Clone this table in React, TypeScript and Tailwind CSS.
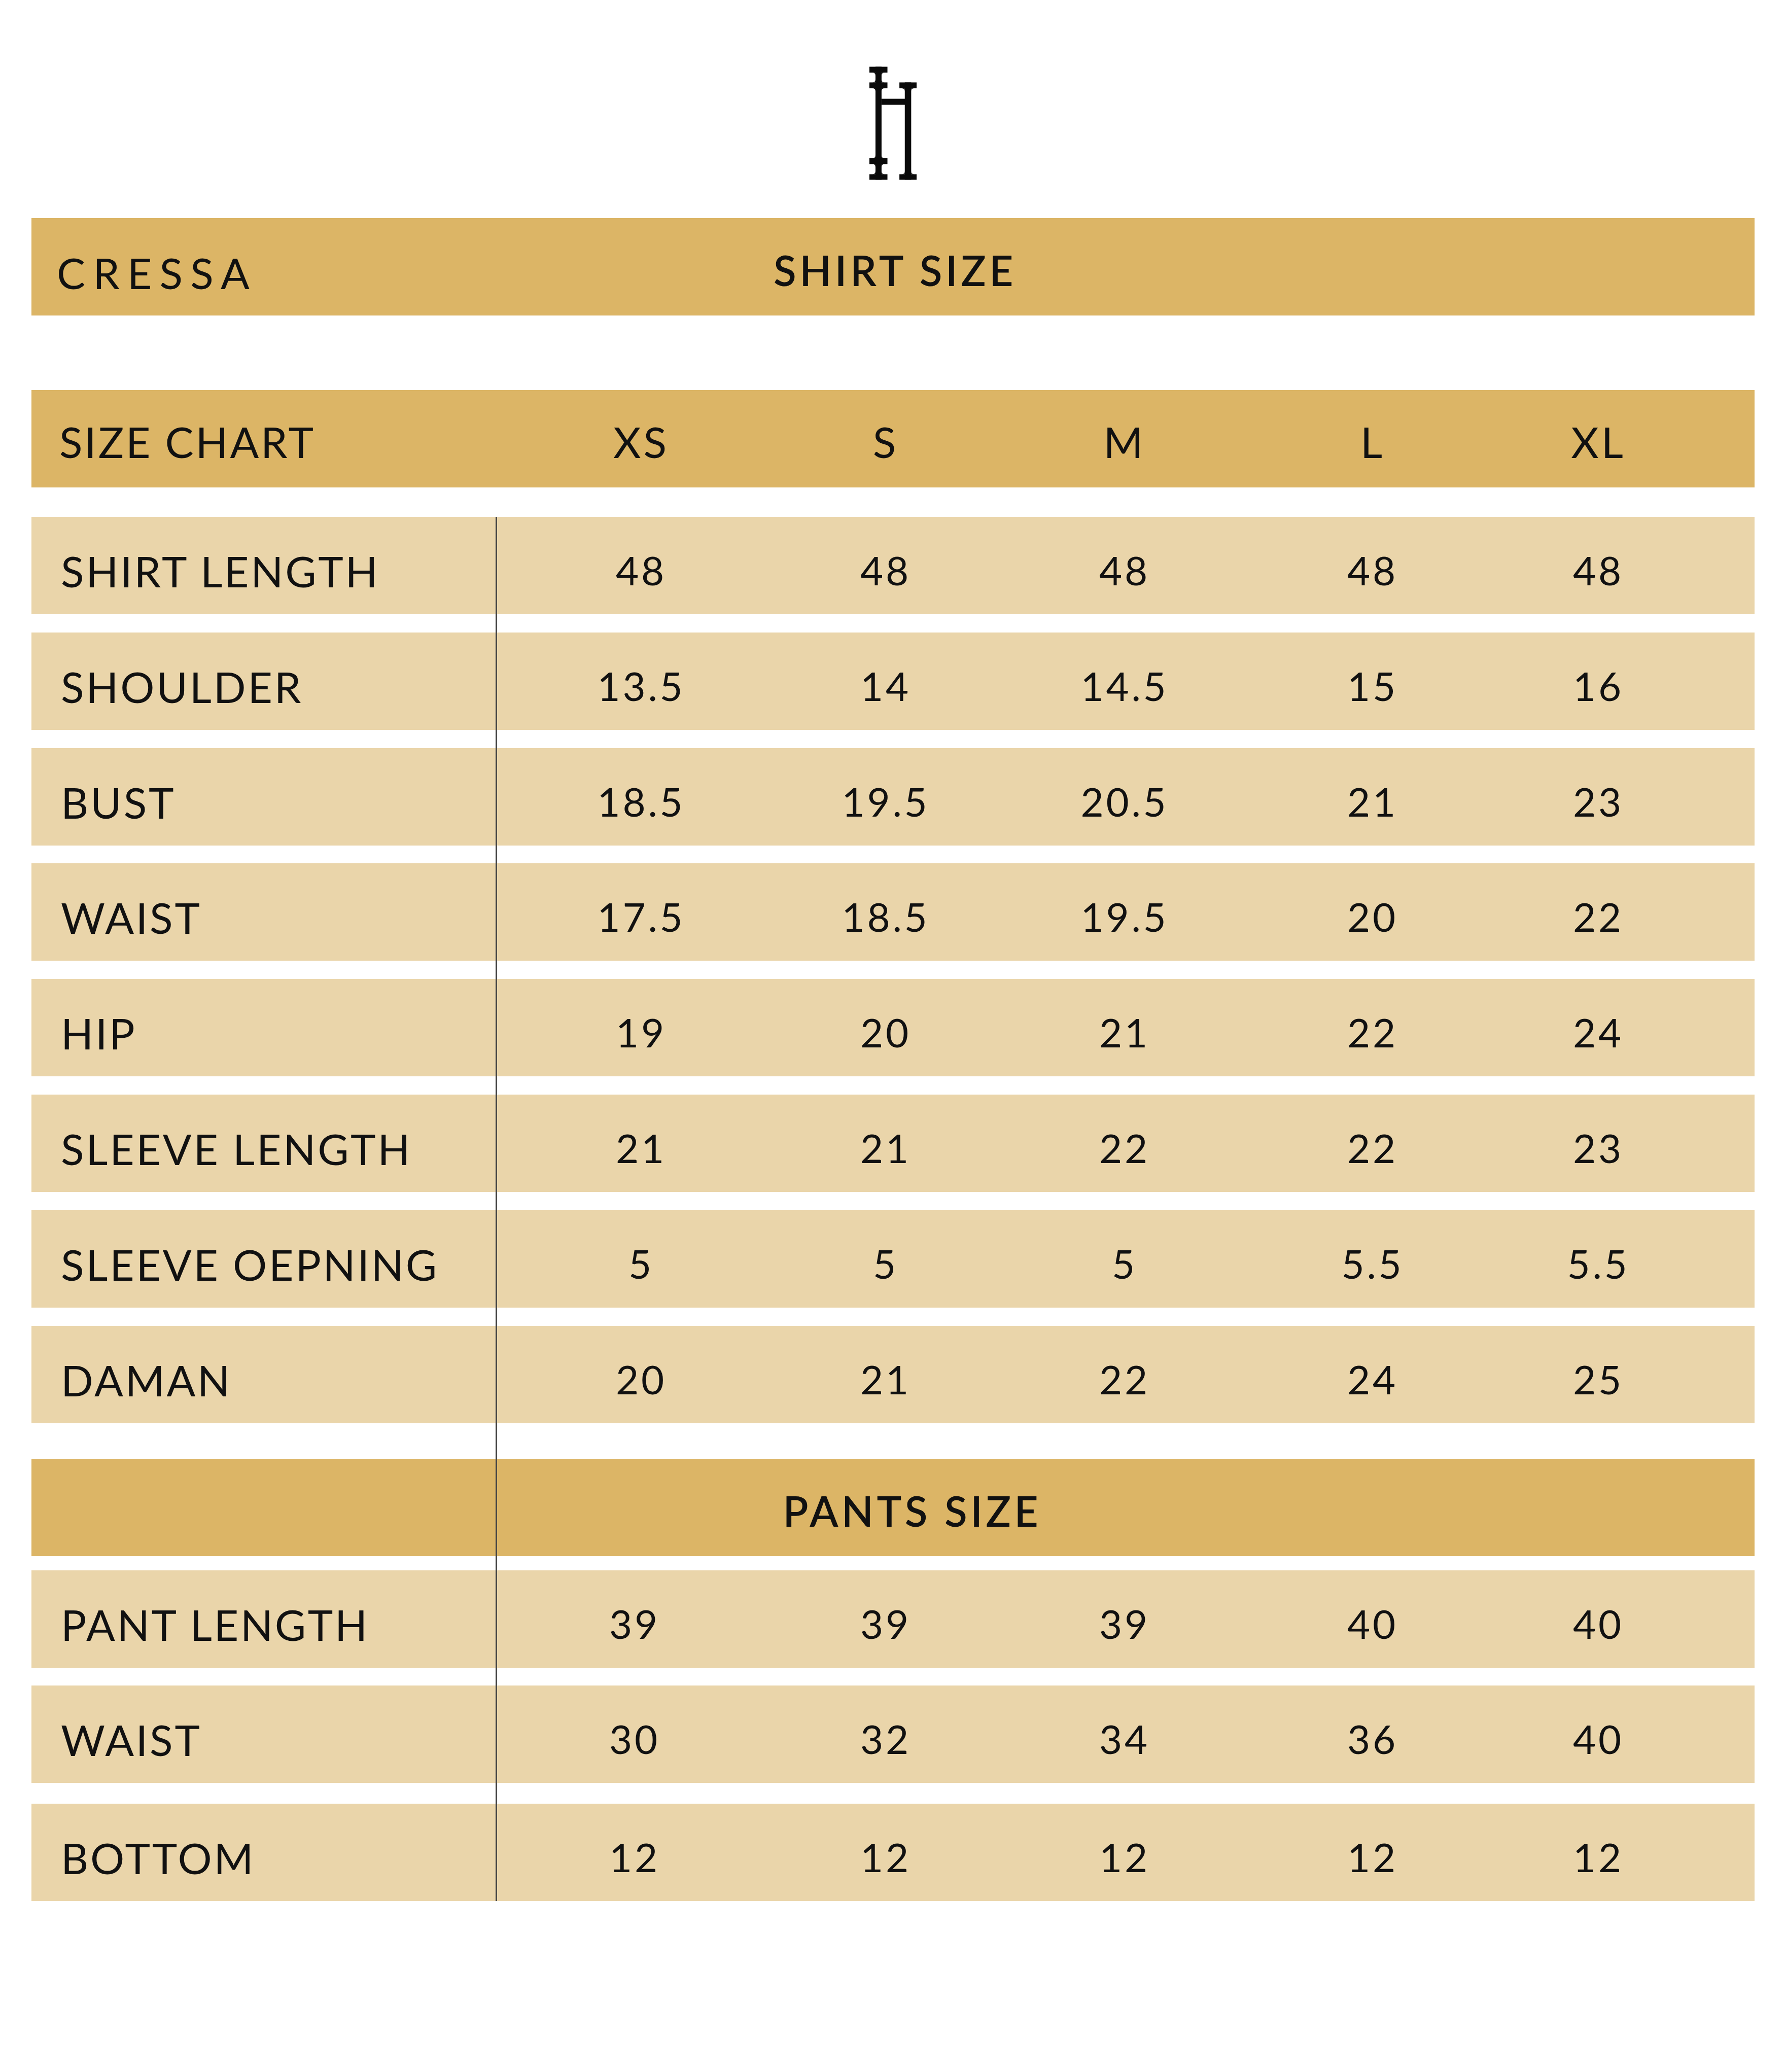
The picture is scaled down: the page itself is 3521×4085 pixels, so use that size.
const shirtRows: [string, string[]][] = [
  ["SHIRT LENGTH", ["48", "48", "48", "48", "48"]],
  ["SHOULDER", ["13.5", "14", "14.5", "15", "16"]],
  ["BUST", ["18.5", "19.5", "20.5", "21", "23"]],
  ["WAIST", ["17.5", "18.5", "19.5", "20", "22"]],
  ["HIP", ["19", "20", "21", "22", "24"]],
  ["SLEEVE LENGTH", ["21", "21", "22", "22", "23"]],
  ["SLEEVE OEPNING", ["5", "5", "5", "5.5", "5.5"]],
  ["DAMAN", ["20", "21", "22", "24", "25"]],
];

const pantRows: [string, string[]][] = [
  ["PANT LENGTH", ["39", "39", "39", "40", "40"]],
  ["WAIST", ["30", "32", "34", "36", "40"]],
  ["BOTTOM", ["12", "12", "12", "12", "12"]],
];

const pantGaps = ["mt-[28px]", "mt-[35px]", "mt-[41px]"];

// little concave bracket where a slab meets a stem
function fillet(cx: number, cy: number, dx: number, dy: number, s = 18) {
  return `M${cx + dx * s} ${cy} L${cx} ${cy} L${cx} ${cy + dy * s} Q${cx} ${cy} ${cx + dx * s} ${cy} Z`;
}

function Logo() {
  const f = [
    // left stem x 36..72
    fillet(36, 35, -1, 1), fillet(72, 35, 1, 1),
    fillet(36, 93, -1, -1), fillet(72, 93, 1, -1),
    fillet(36, 128, -1, 1), fillet(72, 128, 1, 1),
    fillet(36, 543, -1, -1), fillet(72, 543, 1, -1),
    fillet(36, 578, -1, 1), fillet(72, 578, 1, 1),
    fillet(36, 638, -1, -1), fillet(72, 638, 1, -1),
    // right stem x 210..248
    fillet(210, 128, -1, 1), fillet(248, 128, 1, 1),
    fillet(210, 638, -1, -1), fillet(248, 638, 1, -1),
  ];
  return (
    <svg width="93" height="224" viewBox="0 0 280 671" fill="#0a0a0a">
      <rect x="36" y="0" width="36" height="671" />
      <rect x="0" y="0" width="107" height="35" />
      <rect x="0" y="93" width="107" height="35" />
      <rect x="72" y="190" width="140" height="36" />
      <rect x="210" y="93" width="38" height="578" />
      <rect x="178" y="93" width="102" height="35" />
      <rect x="0" y="543" width="107" height="35" />
      <rect x="0" y="638" width="107" height="33" />
      <rect x="178" y="638" width="102" height="33" />
      {f.map((d, i) => (
        <path key={i} d={d} />
      ))}
    </svg>
  );
}

function DataRow({ label, values, cols }: { label: string; values: string[]; cols: string }) {
  return (
    <div className={`grid ${cols} h-[192px] items-center bg-[#ead5aa]`}>
      <div className="pl-[58px] pt-[22px] text-[84px] leading-none tracking-[0.045em]">{label}</div>
      {values.map((v, i) => (
        <div key={i} className="pl-[10px] pt-[18px] text-center text-[78px] leading-none tracking-[0.06em]">
          {v}
        </div>
      ))}
    </div>
  );
}

export default function App() {
  const shirtCols = "grid-cols-[916px_562px_402px_540px_438px_452px]";
  const pantCols = "grid-cols-[916px_536px_454px_488px_490px_400px]";

  return (
    <div className="w-[3521px] h-[4085px] bg-white text-[#111] font-['Lato','Noto_Sans',sans-serif]">
      {/* Logo */}
      <div className="flex justify-center pt-[131px]">
        <Logo />
      </div>

      {/* Title band */}
      <div className="mx-[62px] mt-[75px] h-[192px] grid grid-cols-[1fr_auto_1fr] items-center bg-[#dcb566]">
        <div className="pl-[50px] pt-[24px] text-[84px] leading-none tracking-[0.18em]">CRESSA</div>
        <div className="pl-[8px] pt-[12px] text-[82px] font-semibold leading-none tracking-[0.08em]">SHIRT SIZE</div>
        <div />
      </div>

      {/* Size header */}
      <div className={`mx-[62px] mt-[147px] h-[192px] grid ${shirtCols} items-center bg-[#dcb566]`}>
        <div className="pl-[55px] pt-[12px] text-[84px] leading-none tracking-[0.045em]">SIZE CHART</div>
        {["XS", "S", "M", "L", "XL"].map((s) => (
          <div key={s} className="pl-[10px] pt-[12px] text-center text-[84px] leading-none tracking-[0.06em]">
            {s}
          </div>
        ))}
      </div>

      {/* Measurements */}
      <div className="relative mx-[62px] mt-[58px]">
        <div className="absolute left-[915px] top-0 bottom-0 w-[3px] bg-[#444]" />

        <div className="flex flex-col gap-[35.8px]">
          {shirtRows.map(([label, values]) => (
            <DataRow key={label} label={label} values={values} cols={shirtCols} />
          ))}
        </div>

        <div className="mt-[70px] h-[192px] flex items-center justify-center pl-[76px] bg-[#dcb566]">
          <div className="pt-[12px] text-[82px] font-semibold leading-none tracking-[0.08em]">PANTS SIZE</div>
        </div>

        {pantRows.map(([label, values], i) => (
          <div key={label} className={pantGaps[i]}>
            <DataRow label={label} values={values} cols={pantCols} />
          </div>
        ))}
      </div>
    </div>
  );
}
